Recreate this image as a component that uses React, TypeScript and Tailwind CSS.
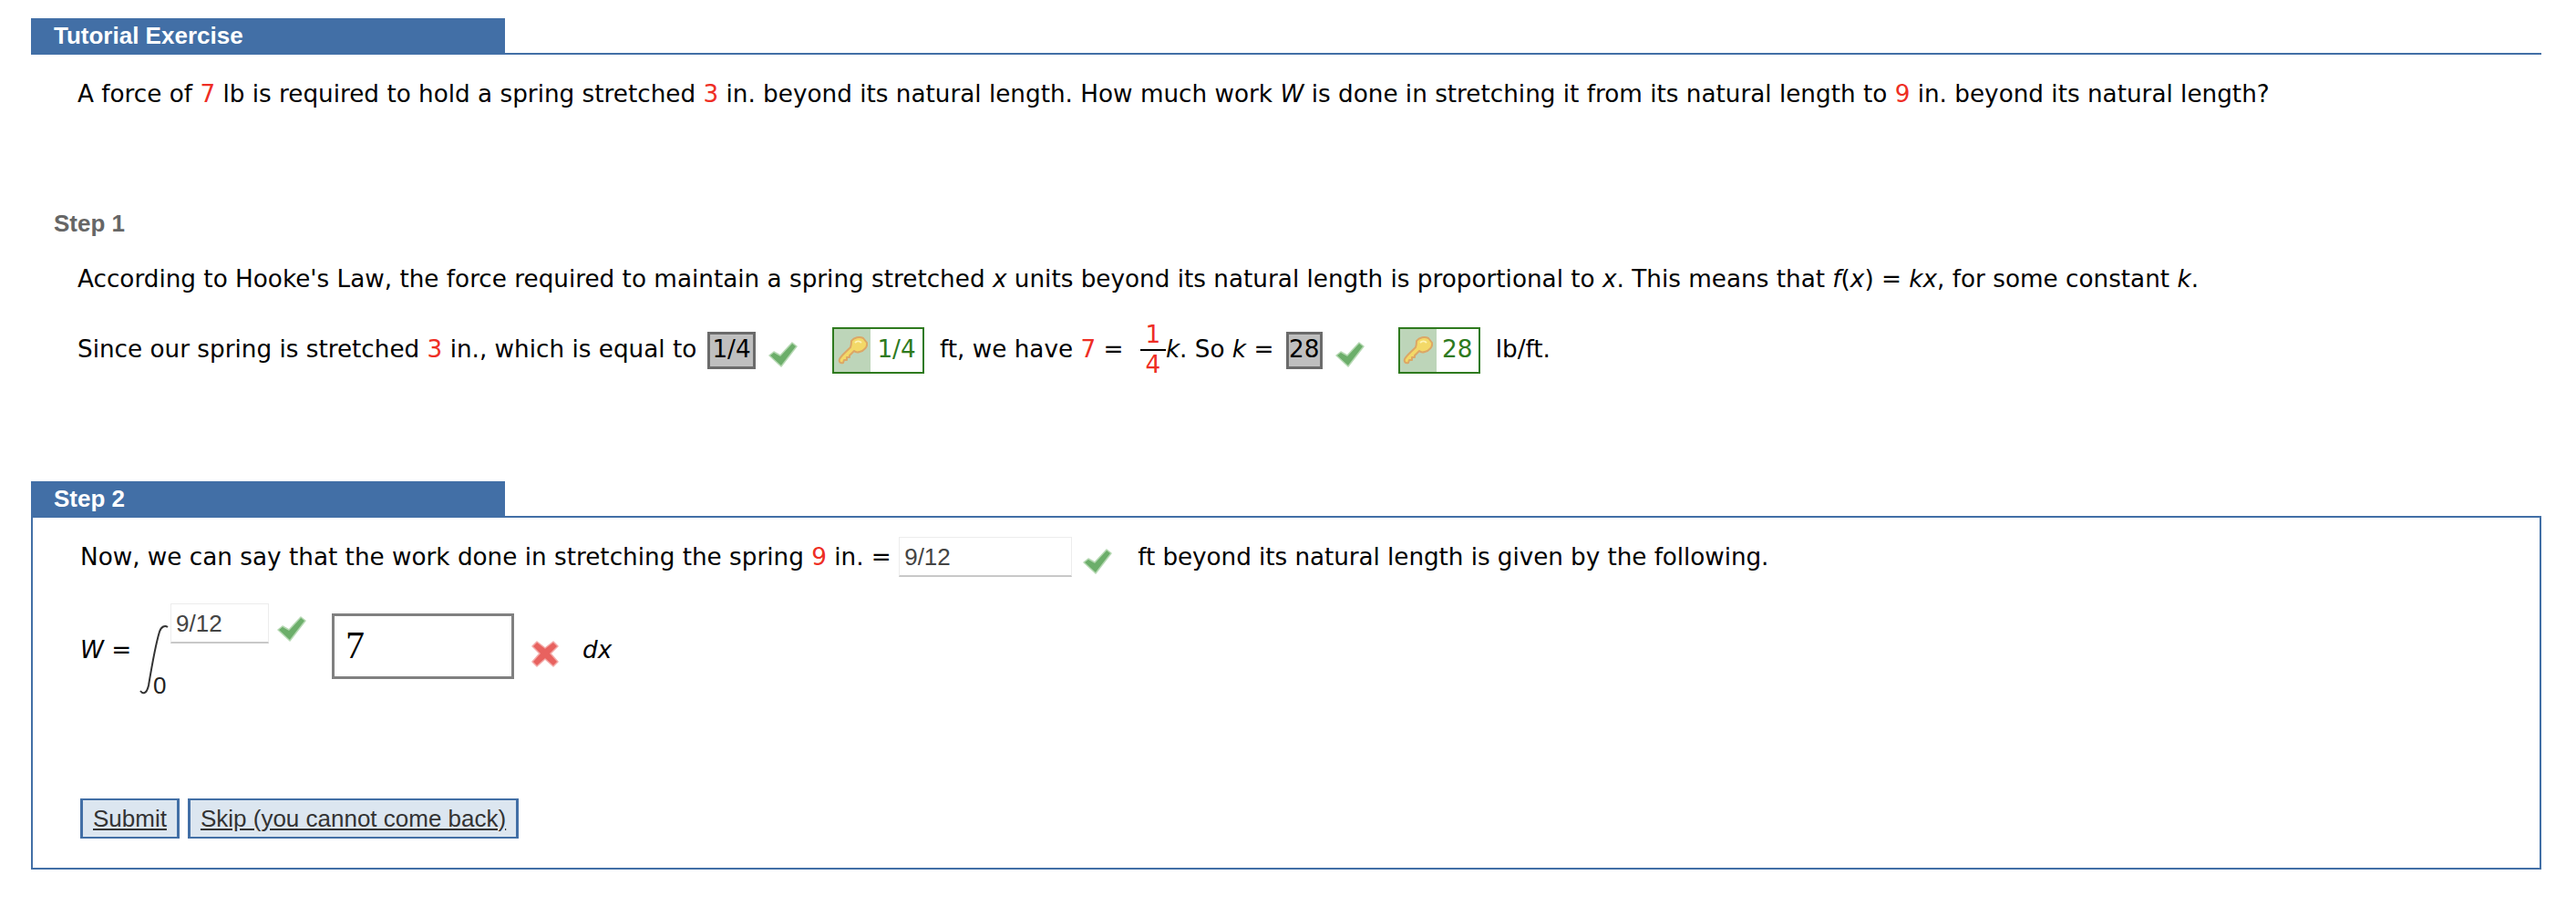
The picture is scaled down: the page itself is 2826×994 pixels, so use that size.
import React from 'react';

const BLUE = 'border-[#426fa6]';

const Red = ({ children }: { children: React.ReactNode }) => <span className="text-[#ee2e24]">{children}</span>;
const Var = ({ children }: { children: React.ReactNode }) => <i>{children}</i>;

const Check = ({ className = '' }: { className?: string }) => (
  <svg viewBox="0 0 32 28" className={`h-[28px] w-[32px] shrink-0 ${className}`}>
    <path d="M1 15 L6 11 L13 15 L26 1 L31 5 L14 27 Z" fill="#6cae6a" stroke="#b5d8b2" strokeWidth="1.5" strokeLinejoin="round" />
  </svg>
);

const Cross = () => (
  <svg viewBox="0 0 30 30" className="h-[30px] w-[30px] shrink-0">
    <path d="M6 2 L15 9 L24 2 L29 7 L21 15 L29 24 L24 29 L15 21 L6 29 L1 24 L9 15 L1 7 Z" fill="#e8625f" stroke="#f3aaa8" strokeWidth="1.5" strokeLinejoin="round" />
  </svg>
);

const KeyIcon = () => (
  <svg viewBox="0 0 33 32" className="h-[32px] w-[33px] shrink-0">
    <path
      d="M15 6 C18 2 24 1 28 3 L32 8 C33 12 29 17 24 18 C21 19 19 18 18 17 L13 22 L13 24 L10 24 L10 27 L7 27 L6 30 C3 31 1 29 2 26 C3 23 8 19 14 13 C15 11 15 8 15 6 Z"
      fill="#f3d968"
      stroke="#dca765"
      strokeWidth="2"
      strokeLinejoin="round"
    />
    <path d="M19 8 C21 6 24 6 26 8" fill="none" stroke="#fdf3b8" strokeWidth="2" />
  </svg>
);

const Graded = ({ value, className }: { value: string; className: string }) => (
  <span className={`flex h-[41px] shrink-0 items-center justify-center border-[3px] border-[#6b6b6b] bg-[#bfbfbf] text-black ${className}`}>{value}</span>
);

const KeyAnswer = ({ value, className }: { value: string; className: string }) => (
  <span className={`flex h-[51px] shrink-0 items-stretch border-[2px] border-[#2e7a1e] ${className}`}>
    <span className="flex w-[40px] items-center justify-center bg-[#bdd5b9]">
      <KeyIcon />
    </span>
    <span className="flex flex-1 items-center justify-center text-[#2e7a1e]">{value}</span>
  </span>
);

const Tab = ({ title }: { title: string }) => (
  <div className={`h-10 border-b-2 ${BLUE}`}>
    <div className="flex h-10 w-[520px] items-center bg-[#426fa6] pb-[2px] pl-[25px] font-['Liberation_Sans',Arial,sans-serif] text-[26px] font-bold text-white">
      {title}
    </div>
  </div>
);

const TextInput = ({ value, className }: { value: string; className: string }) => (
  <span className={`flex h-[44px] shrink-0 items-center border border-[#ececec] border-b-2 border-b-[#c8c8c8] bg-white pl-[5px] pt-[2px] font-['Liberation_Sans',Arial,sans-serif] text-[26px] text-[#444] ${className}`}>
    {value}
  </span>
);

export default function App() {
  return (
    <div className="min-h-[994px] bg-white pl-[34px] pr-[38px] pt-5 font-['DejaVu_Sans',Verdana,sans-serif] text-[26.25px] text-black">
      <Tab title="Tutorial Exercise" />
      <p className="mt-[26px] pl-[51px] leading-[34px] whitespace-nowrap">
        A force of <Red>7</Red> lb is required to hold a spring stretched <Red>3</Red> in. beyond its natural length. How much work <Var>W</Var> is done in stretching it from its natural length to <Red>9</Red> in. beyond its natural length?
      </p>

      <h2 className="mt-[109px] pl-[25px] font-['Liberation_Sans',Arial,sans-serif] text-[26px] leading-[32px] font-bold text-[#666]">Step 1</h2>
      <p className="mt-[28px] pl-[51px] leading-[34px] whitespace-nowrap">
        According to Hooke's Law, the force required to maintain a spring stretched <Var>x</Var> units beyond its natural length is proportional to <Var>x</Var>. This means that <Var>f</Var>(<Var>x</Var>) = <Var>kx</Var>, for some constant <Var>k</Var>.
      </p>

      <div className="mt-[31px] flex h-[60px] items-center pl-[51px] whitespace-pre">
        <span className="w-[691px]">Since our spring is stretched <Red>3</Red> in., which is equal to </span>
        <Graded value="1/4" className="w-[53px]" />
        <Check className="ml-[14px] mt-[10px]" />
        <KeyAnswer value="1/4" className="ml-[38px] w-[101px]" />
        <span className="ml-[17px]">ft, we have <Red>7</Red> = </span>
        <span className="ml-[10px] flex w-[28px] shrink-0 flex-col items-center leading-[31px] text-[#ee2e24]">
          <span className="w-full border-b-2 border-black text-center">1</span>
          <span>4</span>
        </span>
        <span><Var>k</Var>. So <Var>k</Var> = </span>
        <Graded value="28" className="ml-[5px] w-[40px]" />
        <Check className="ml-[14px] mt-[10px]" />
        <KeyAnswer value="28" className="ml-[37px] w-[90px]" />
        <span className="ml-[17px]">lb/ft.</span>
      </div>

      <div className="mt-[114px]">
        <Tab title="Step 2" />
        <div className={`-mt-[2px] h-[388px] border-2 border-t-0 ${BLUE} pl-[52px] pt-[23px]`}>
          <div className="flex h-[44px] items-center whitespace-pre">
            <span className="pt-[2px]">Now, we can say that the work done in stretching the spring <Red>9</Red> in. = </span>
            <TextInput value="9/12" className="w-[190px]" />
            <Check className="ml-[12px] mt-[10px]" />
            <span className="ml-[28px] pt-[2px] tracking-[-0.06px]">ft beyond its natural length is given by the following.</span>
          </div>

          <div className="mt-[29px] flex h-[100px] items-start">
            <span className="mt-[32px] w-[65px] whitespace-pre"><Var>W</Var> = </span>
            <span className="relative h-[100px] w-[34px] shrink-0">
              <svg viewBox="0 0 32 76" className="absolute left-0 top-[24px] h-[76px] w-[32px]">
                <path d="M1 72 C4 76 8 75 10 66 C13 48 18 20 22 7 C24 1 28 0 31 2" fill="none" stroke="#333" strokeWidth="2" />
              </svg>
              <span className="absolute left-[15px] top-[75px] font-['Liberation_Sans',Arial,sans-serif] text-[26px] leading-[30px] text-[#222]">0</span>
            </span>
            <TextInput value="9/12" className="w-[108px]" />
            <Check className="ml-[9px] mt-[14px]" />
            <span className="ml-[28px] mt-[11px] flex h-[72px] w-[200px] shrink-0 items-center border-[3px] border-[#808080] pb-[2px] pl-[12px] font-['Liberation_Serif','Times_New_Roman',serif] text-[42px]">7</span>
            <span className="ml-[19px] mt-[40px]"><Cross /></span>
            <span className="ml-[26px] mt-[32px]"><Var>dx</Var></span>
          </div>

          <div className="mt-[114px] flex gap-[9px] font-['Liberation_Sans',Arial,sans-serif] text-[26px] text-[#333]">
            <span className={`flex h-[44px] items-center border-x-[3px] border-y-2 ${BLUE} bg-[#dce6f0] px-[11px] underline`}>Submit</span>
            <span className={`flex h-[44px] items-center border-x-[3px] border-y-2 ${BLUE} bg-[#dce6f0] px-[11px] underline`}>Skip (you cannot come back)</span>
          </div>
        </div>
      </div>
    </div>
  );
}
